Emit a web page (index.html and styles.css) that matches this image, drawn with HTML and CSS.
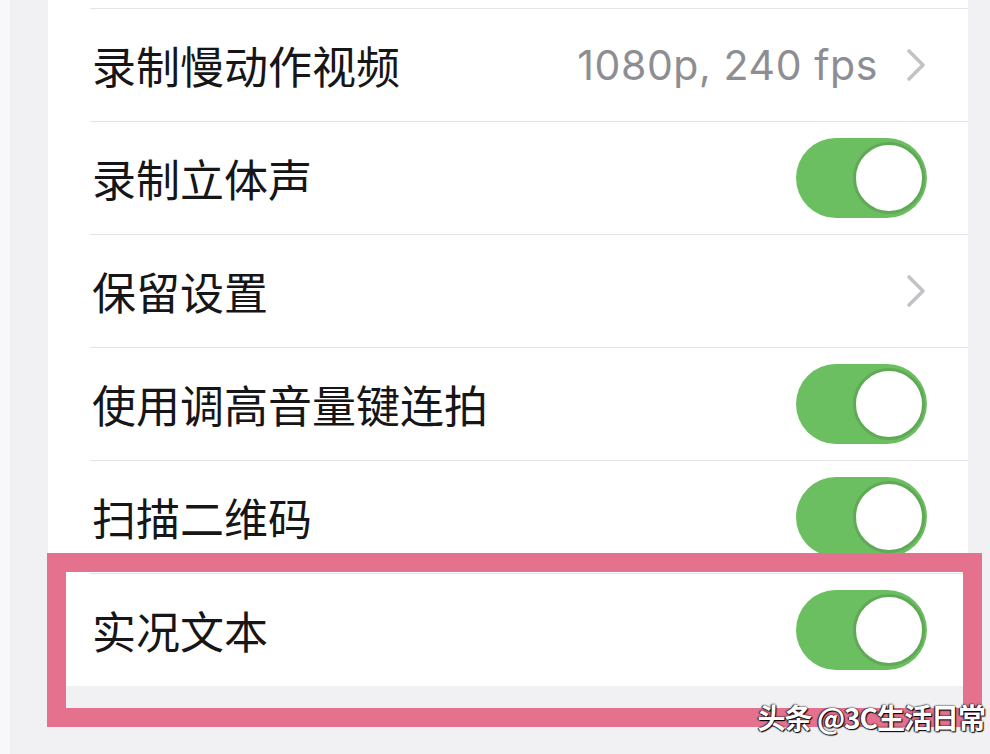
FILE: index.html
```html
<!DOCTYPE html>
<html lang="zh-CN">
<head>
<meta charset="utf-8">
<title>相机设置</title>
<link rel="stylesheet" href="styles.css">
</head>
<body>
<div class="screen">
  <div class="edge"></div>
  <div class="main">
    <div class="card">
      <div class="cap"></div>
      <div class="row">
        <span class="label">录制慢动作视频</span>
        <span class="trail">
          <span class="value">1080p, 240 fps</span>
          <svg class="chev" width="20" height="34" viewBox="0 0 20 34"><path d="M3 3 L17 17 L3 31" fill="none" stroke="#c3c3c7" stroke-width="3.6" stroke-linecap="round" stroke-linejoin="round"/></svg>
        </span>
      </div>
      <div class="row">
        <span class="label">录制立体声</span>
        <span class="switch"><span class="knob"></span></span>
      </div>
      <div class="row">
        <span class="label">保留设置</span>
        <span class="trail">
          <svg class="chev" width="20" height="34" viewBox="0 0 20 34"><path d="M3 3 L17 17 L3 31" fill="none" stroke="#c3c3c7" stroke-width="3.6" stroke-linecap="round" stroke-linejoin="round"/></svg>
        </span>
      </div>
      <div class="row">
        <span class="label">使用调高音量键连拍</span>
        <span class="switch"><span class="knob"></span></span>
      </div>
      <div class="row">
        <span class="label">扫描二维码</span>
        <span class="switch"><span class="knob"></span></span>
      </div>
      <div class="row">
        <span class="label">实况文本</span>
        <span class="switch"><span class="knob"></span></span>
      </div>
    </div>
  </div>
  <div class="highlight"></div>
  <div class="watermark">头条 @3C生活日常</div>
</div>
</body>
</html>
```
FILE: styles.css
```css
html, body {
  margin: 0;
  padding: 0;
}
body {
  background: #f1f1f4;
  font-family: "Noto Sans CJK SC", "Noto Sans", sans-serif;
}
.screen {
  position: relative;
  width: 990px;
  height: 754px;
  overflow: hidden;
  display: flex;
  background: #f1f1f4;
}
.edge {
  width: 10px;
  background: #f8f8fa;
  flex: none;
}
.main {
  flex: 1;
  padding-left: 38px;
  padding-right: 22px;
}
.card {
  background: #ffffff;
}
.cap {
  height: 8px;
}
.row {
  margin-left: 42px;
  height: 112px;
  border-top: 1px solid #e4e4e8;
  padding-right: 41px;
  display: flex;
  align-items: center;
  justify-content: space-between;
}
.label {
  font-size: 44px;
  color: #161618;
  padding-left: 2px;
  letter-spacing: 0;
}
.trail {
  display: flex;
  align-items: center;
  gap: 28px;
  padding-right: 1px;
}
.value {
  font-family: Inter, "Noto Sans", sans-serif;
  font-size: 41px;
  color: #8d8d92;
  letter-spacing: 0.6px;
}
.chev {
  display: block;
}
.switch {
  width: 131px;
  height: 80px;
  border-radius: 40px;
  background: #6cbf60;
  display: flex;
  align-items: center;
  justify-content: flex-end;
  padding-right: 2px;
  box-sizing: border-box;
}
.knob {
  width: 72px;
  height: 72px;
  border-radius: 50%;
  background: #ffffff;
  border: 3px solid #5fa957;
  box-sizing: border-box;
}
.highlight {
  position: absolute;
  left: 47px;
  top: 553px;
  width: 935px;
  height: 174px;
  border: 19px solid #e4718e;
  box-sizing: border-box;
}
.watermark {
  position: absolute;
  right: 5px;
  top: 697px;
  font-size: 28px;
  font-weight: 700;
  color: #ffffff;
  letter-spacing: -1px;
  text-shadow: 1px 1px 1px #000, -1px 0 1px #222, 0 0 2px #000;
}
```
